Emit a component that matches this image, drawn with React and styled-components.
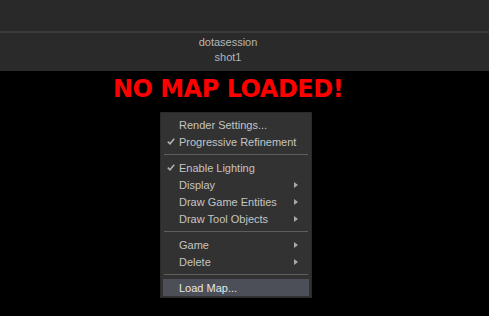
import React from "react";
import styled, { createGlobalStyle } from "styled-components";

const Global = createGlobalStyle`
  html, body { margin: 0; padding: 0; background: #000; }
  body { width: 489px; height: 316px; overflow: hidden; font-family: "Liberation Sans", Arial, sans-serif; }
`;

const Page = styled.div`
  display: flex;
  flex-direction: column;
  width: 489px;
  height: 316px;
  background: #000;
`;

const TopBar = styled.div`
  height: 31px;
  background: #292929;
  border-bottom: 2px solid #3a3a3a;
`;

const Header = styled.div`
  height: 38px;
  box-sizing: border-box;
  background: #2a2a2a;
  display: flex;
  flex-direction: column;
  align-items: center;
  padding: 2px 33px 0 0;
  color: #b6b6b6;
  font-size: 11px;
  line-height: 15px;
`;

const Main = styled.div`
  flex: 1;
  display: flex;
  flex-direction: column;
`;

const Title = styled.div`
  padding-right: 33px;
  text-align: center;
  color: #ff0000;
  font-family: "DejaVu Sans", Verdana, sans-serif;
  font-weight: bold;
  font-size: 24px;
  line-height: 30px;
  margin-top: 3px;
  letter-spacing: -0.5px;
`;

const Menu = styled.div`
  margin-left: 160px;
  margin-top: 8px;
  width: 146px;
  background: #323232;
  border: 1px solid #2a2a2a;
  padding: 3px 2px 1px 2px;
  display: flex;
  flex-direction: column;
`;

const Item = styled.div`
  height: 17px;
  display: flex;
  align-items: center;
  position: relative;
  padding-left: 16px;
  color: ${(p) => (p.$active ? "#e6e6e6" : "#c4c4c4")};
  background: ${(p) => (p.$active ? "#4c4f57" : "transparent")};
  font-size: 11px;
`;

const Check = styled.svg`
  position: absolute;
  left: 4px;
  top: 5px;
`;

const Arrow = styled.svg`
  position: absolute;
  left: 131px;
  top: 6px;
`;

const Sep = styled.div`
  height: 9px;
  display: flex;
  align-items: center;
  &::after {
    content: "";
    flex: 1;
    height: 1px;
    background: #5e5e5e;
    margin: 0 1px;
  }
`;

const CheckIcon = () => (
  <Check width="8" height="7" viewBox="0 0 8 7">
    <path d="M0.8 3.6 L3 5.8 L7.2 0.8" fill="none" stroke="#b0b0b0" strokeWidth="1.6" />
  </Check>
);

const ArrowIcon = () => (
  <Arrow width="4" height="6" viewBox="0 0 4 6">
    <path d="M0 0 L4 3 L0 6 Z" fill="#a8a8a8" />
  </Arrow>
);

const items = [
  { label: "Render Settings..." },
  { label: "Progressive Refinement", check: true },
  { sep: true },
  { label: "Enable Lighting", check: true },
  { label: "Display", sub: true },
  { label: "Draw Game Entities", sub: true },
  { label: "Draw Tool Objects", sub: true },
  { sep: true },
  { label: "Game", sub: true },
  { label: "Delete", sub: true },
  { sep: true },
  { label: "Load Map...", active: true },
];

export default function App() {
  return (
    <Page>
      <Global />
      <TopBar />
      <Header>
        <div>dotasession</div>
        <div>shot1</div>
      </Header>
      <Main>
        <Title>NO MAP LOADED!</Title>
        <Menu>
          {items.map((it, i) =>
            it.sep ? (
              <Sep key={i} />
            ) : (
              <Item key={i} $active={it.active}>
                {it.check && <CheckIcon />}
                {it.label}
                {it.sub && <ArrowIcon />}
              </Item>
            )
          )}
        </Menu>
      </Main>
    </Page>
  );
}
